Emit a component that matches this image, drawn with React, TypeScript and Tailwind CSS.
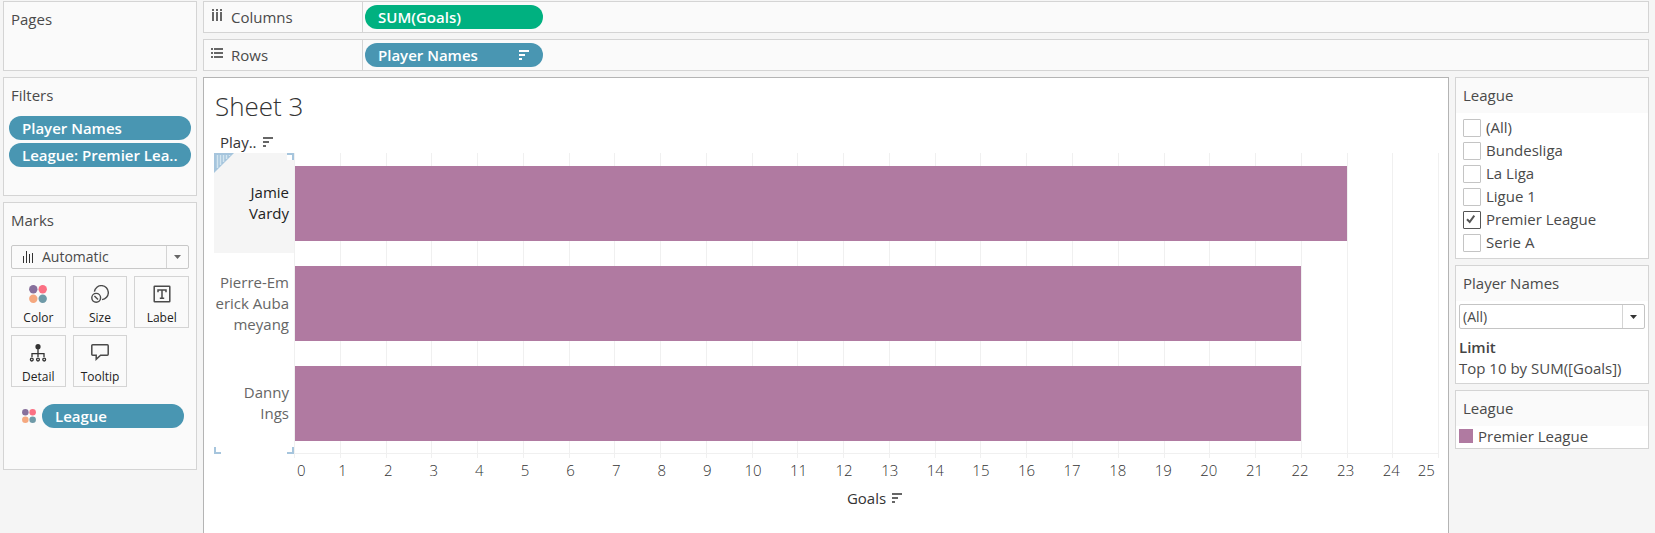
import { useState } from 'react';
import type { ReactNode } from 'react';

interface IPlayer {
  name: string[];
  goals: number;
}

const MAX_GOALS = 25;

const players: IPlayer[] = [
  { name: ['Jamie', 'Vardy'], goals: 23 },
  { name: ['Pierre-Em', 'erick Auba', 'meyang'], goals: 22 },
  { name: ['Danny', 'Ings'], goals: 22 },
];

const leagues = [
  '(All)',
  'Bundesliga',
  'La Liga',
  'Ligue 1',
  'Premier League',
  'Serie A',
];

//ICONS
const SortIcon = () => (
  <svg width="10" height="10" viewBox="0 0 10 10" fill="currentColor">
    <path d="M0 0h10v2H0zM0 4h6v2H0zM0 8h3v2H0z" />
  </svg>
);

const ColumnsIcon = () => (
  <svg width="12" height="12" viewBox="0 0 12 12" fill="#666666" className="-mt-1">
    <path d="M1 0h2v2H1zM5 0h2v2H5zM9 0h2v2H9zM1 3h2v9H1zM5 3h2v9H5zM9 3h2v9H9z" />
  </svg>
);

const RowsIcon = () => (
  <svg width="12" height="12" viewBox="0 0 12 12" fill="#666666" className="-mt-1">
    <path d="M0 1h2v2H0zM0 5h2v2H0zM0 9h2v2H0zM3 1h9v2H3zM3 5h9v2H3zM3 9h9v2H3z" />
  </svg>
);

const ColorIcon = ({ size }: { size: number }) => (
  <svg width={size} height={size} viewBox="0 0 18 18" className="shrink-0">
    <circle cx="4.3" cy="4.3" r="4.2" fill="#87709c" />
    <circle cx="13.7" cy="4.3" r="4.2" fill="#fb7083" />
    <circle cx="4.3" cy="13.7" r="4.2" fill="#f5a87f" />
    <circle cx="13.7" cy="13.7" r="4.2" fill="#6f9aa8" />
  </svg>
);

const SizeIcon = () => (
  <svg width="18" height="18" viewBox="0 0 18 18" fill="none" stroke="#4a4a4a" strokeWidth="1.4">
    <path d="M3.4 6.6A7 7 0 1 1 11 14.6" />
    <circle cx="5.2" cy="12.8" r="4.4" />
    <path d="M3.4 11l3.6 3.6" />
  </svg>
);

const LabelIcon = () => (
  <svg width="18" height="18" viewBox="0 0 18 18" fill="none" stroke="#4a4a4a">
    <rect x="1.2" y="1.2" width="15.6" height="15.6" rx="0.6" strokeWidth="1.5" />
    <path d="M5 7.2V5h8v2.2M9 5v8M6.8 13.2h4.4" strokeWidth="1.5" />
  </svg>
);

const DetailIcon = () => (
  <svg width="18" height="18" viewBox="0 0 18 18" fill="none" stroke="#333333">
    <circle cx="9" cy="2.7" r="2.6" fill="#333333" stroke="none" />
    <path d="M9 5v8M3 13V9.6h12V13" strokeWidth="1.3" />
    <circle cx="2.8" cy="15.6" r="1.4" strokeWidth="1.3" />
    <circle cx="9" cy="15.6" r="1.4" strokeWidth="1.3" />
    <circle cx="15.2" cy="15.6" r="1.4" strokeWidth="1.3" />
  </svg>
);

const TooltipIcon = () => (
  <svg width="18" height="18" viewBox="0 0 18 18" fill="none" stroke="#4a4a4a" strokeWidth="1.5">
    <path d="M1.7.8h14.6q.9 0 .9.9v8.6q0 .9-.9.9H9.6L5.2 15.2v-4H1.7q-.9 0-.9-.9V1.7q0-.9.9-.9z" />
  </svg>
);

const BarsIcon = () => (
  <svg width="11" height="12" viewBox="0 0 11 12" fill="#333333">
    <path d="M0 5h1v7H0zM3 0h1v12H3zM6 3h1v9H6zM9 2h1v10H9z" />
  </svg>
);

const Caret = ({ className }: { className: string }) => (
  <svg width="7" height="4" viewBox="0 0 7 4" className={className} fill="currentColor">
    <path d="M0 0h7L3.5 4z" />
  </svg>
);

//CARDS
const Card = ({
  title,
  className = '',
  children,
}: {
  title: string;
  className?: string;
  children?: ReactNode;
}) => (
  <section className={`border border-[#d4d4d4] bg-[#fafafa] ${className}`}>
    <h2 className="h-[35px] pl-[7px] leading-[35px]">{title}</h2>
    {children}
  </section>
);

const Pill = ({
  label,
  color = 'bg-[#4996b2]',
  className = '',
  sorted = false,
}: {
  label: string;
  color?: string;
  className?: string;
  sorted?: boolean;
}) => (
  <button
    className={`flex h-6 items-center justify-between rounded-full pr-[14px] pl-[13px] font-semibold whitespace-nowrap text-white ${color} ${className}`}
  >
    {label}
    {sorted && <SortIcon />}
  </button>
);

const Shelf = ({
  icon,
  label,
  children,
}: {
  icon: ReactNode;
  label: string;
  children: ReactNode;
}) => (
  <section className="flex h-8 border border-[#d4d4d4] bg-[#fafafa]">
    <h2 className="flex w-[159px] items-center gap-2 border-r border-[#d4d4d4] pl-[7px]">
      {icon}
      {label}
    </h2>
    <div className="flex items-center pl-[2px]">{children}</div>
  </section>
);

const MarkButton = ({ icon, label }: { icon: ReactNode; label: string }) => (
  <button className="flex h-[52px] flex-col items-center gap-[7px] border border-[#d4d4d4] pt-2 text-xs leading-4 text-[#222222]">
    {icon}
    {label}
  </button>
);

const Chart = () => {
  const ticks = Array.from({ length: MAX_GOALS + 1 }, (_, i) => i);

  return (
    <div className="pr-[9px] pl-[10px]">
      <div className="flex h-[26px] items-center gap-[6px] pt-1 pl-[6px] text-[#333333]">
        Play..
        <span className="text-[#666666]">
          <SortIcon />
        </span>
      </div>

      <div className="flex">
        <div className="relative w-20 shrink-0 text-right leading-[21px] text-[#666666]">
          {players.map((player, i) => (
            <div
              key={i}
              className={`flex h-[100px] flex-col justify-center pr-[5px] ${
                i === 0 ? 'bg-[#f5f5f5] text-[#222222]' : ''
              }`}
            >
              {player.name.map((line) => (
                <span key={line}>{line}</span>
              ))}
            </div>
          ))}

          {/* selection handles */}
          <svg width="20" height="20" viewBox="0 0 20 20" className="absolute top-0 left-0">
            <path d="M0 0h20L0 20z" fill="#a6c5dd" />
            <path
              d="M3.5 2v13M6.5 2v10M9.5 2v7M12.5 2v4M15.5 2v1"
              stroke="#d3e5f0"
              strokeWidth="1.5"
            />
          </svg>
          <span className="absolute top-0 right-0 size-[7px] border-t-2 border-r-2 border-[#a6c5dd] bg-white"></span>
          <span className="absolute bottom-0 left-0 size-[7px] border-b-2 border-l-2 border-[#a6c5dd]"></span>
          <span className="absolute right-0 bottom-0 size-[7px] border-r-2 border-b-2 border-[#a6c5dd]"></span>
        </div>

        <div className="relative grow">
          <div className="absolute inset-x-0 top-0 -bottom-1 flex border-r border-[#f0f0f0]">
            {ticks.slice(1).map((tick) => (
              <span key={tick} className="flex-1 border-l border-[#f0f0f0]"></span>
            ))}
          </div>
          <div className="relative border-b border-[#f0f0f0] px-px">
            {players.map((player, i) => (
              <div key={i} className="flex h-[100px] items-center pt-px">
                <div
                  className="h-[75px] bg-[#b07aa1]"
                  style={{ width: `${(player.goals / MAX_GOALS) * 100}%` }}
                ></div>
              </div>
            ))}
          </div>
        </div>
      </div>

      <div className="mt-[6px] flex pr-[2px] pl-[79px] leading-5 font-light text-[#333333]">
        {ticks.map((tick) => {
          if (tick === 0) {
            return (
              <span key={tick} className="w-0 flex-[1] pl-1">
                {tick}
              </span>
            );
          }
          if (tick === MAX_GOALS) {
            return (
              <span key={tick} className="w-0 flex-[1]">
                <span className="float-right pr-[2px]">{tick}</span>
              </span>
            );
          }
          return (
            <span key={tick} className="w-0 flex-[2] text-center">
              {tick}
            </span>
          );
        })}
      </div>

      <div className="mt-2 flex items-center justify-center gap-[6px] pl-24 leading-5 text-[#333333]">
        Goals
        <span className="text-[#666666]">
          <SortIcon />
        </span>
      </div>
    </div>
  );
};

const App = () => {
  const [selected, setSelected] = useState<string[]>(['Premier League']);

  const toggle = (league: string) => {
    setSelected((prev) =>
      prev.includes(league)
        ? prev.filter((item) => item !== league)
        : [...prev, league]
    );
  };

  return (
    <main className="flex h-screen gap-[6px] overflow-hidden bg-[#f5f5f5] pt-px pr-[6px] pl-[3px] font-['Open_Sans',sans-serif] text-[15px] text-[#4a4a4a]">
      <aside className="flex w-[194px] shrink-0 flex-col gap-[6px]">
        <Card title="Pages" className="h-[70px]" />

        <Card title="Filters" className="h-[119px]">
          <div className="flex flex-col gap-[3px] px-[5px] pt-[3px]">
            <Pill label="Player Names" />
            <Pill label="League: Premier Lea.." />
          </div>
        </Card>

        <Card title="Marks" className="h-[268px]">
          <div className="px-[7px] pt-[7px]">
            <div className="relative">
              <span className="pointer-events-none absolute top-[6px] left-3">
                <BarsIcon />
              </span>
              <select
                aria-label="Mark type"
                className="block h-6 w-full appearance-none rounded-[2px] border border-[#c8c8c8] pl-[30px] text-sm leading-5"
              >
                <option>Automatic</option>
              </select>
              <span className="pointer-events-none absolute inset-y-px right-px flex w-[22px] items-center justify-center border-l border-[#d4d4d4]">
                <Caret className="text-[#666666]" />
              </span>
            </div>

            <div className="mt-[7px] grid grid-cols-3 gap-[7px]">
              <MarkButton icon={<ColorIcon size={18} />} label="Color" />
              <MarkButton icon={<SizeIcon />} label="Size" />
              <MarkButton icon={<LabelIcon />} label="Label" />
              <MarkButton icon={<DetailIcon />} label="Detail" />
              <MarkButton icon={<TooltipIcon />} label="Tooltip" />
            </div>

            <div className="mt-[17px] flex items-center gap-[6px] pr-[5px] pl-[11px]">
              <ColorIcon size={14} />
              <Pill label="League" className="grow" />
            </div>
          </div>
        </Card>
      </aside>

      <div className="flex min-w-0 grow flex-col gap-[6px]">
        <Shelf icon={<ColumnsIcon />} label="Columns">
          <Pill label="SUM(Goals)" color="bg-[#00b180]" className="w-[178px]" />
        </Shelf>
        <Shelf icon={<RowsIcon />} label="Rows">
          <Pill label="Player Names" className="w-[178px]" sorted />
        </Shelf>

        <div className="flex min-h-0 grow gap-[6px]">
          <section className="min-w-0 grow border border-b-0 border-[#b4b4b4] bg-white">
            <h1 className="h-[49px] pt-[10px] pl-[11px] text-[26px] leading-9 font-light text-[#333333]">
              Sheet 3
            </h1>
            <Chart />
          </section>

          <aside className="flex w-[194px] shrink-0 flex-col gap-[6px]">
            <Card title="League" className="h-[182px]">
              <div className="h-[145px] bg-white pt-[3px] pl-[7px]">
                {leagues.map((league) => (
                  <label key={league} className="relative flex h-[23px] items-center gap-[5px]">
                    <input
                      type="checkbox"
                      checked={selected.includes(league)}
                      onChange={() => toggle(league)}
                      className="size-[18px] appearance-none rounded-[1px] border border-[#c4c4c4] bg-white checked:border-[#555555]"
                    />
                    {selected.includes(league) && (
                      <svg
                        width="18"
                        height="18"
                        viewBox="0 0 18 18"
                        className="pointer-events-none absolute left-0"
                        fill="none"
                        stroke="#555555"
                        strokeWidth="2"
                      >
                        <path d="M4 8.2l2.7 2.8 4.6-6.4" />
                      </svg>
                    )}
                    {league}
                  </label>
                ))}
              </div>
            </Card>

            <Card title="Player Names" className="h-[119px]">
              <div className="h-[82px] bg-white px-[3px] pt-[3px]">
                <div className="relative">
                  <select
                    aria-label="Player Names"
                    className="block h-[25px] w-full appearance-none rounded-[2px] border border-[#c4c4c4] bg-white pl-[3px] text-sm leading-5"
                  >
                    <option>(All)</option>
                  </select>
                  <span className="pointer-events-none absolute inset-y-px right-px flex w-[22px] items-center justify-center border-l border-[#d4d4d4]">
                    <Caret className="text-[#333333]" />
                  </span>
                </div>
                <p className="mt-2 leading-[21px] font-semibold text-[#444444]">Limit</p>
                <p className="leading-[21px] whitespace-nowrap">Top 10 by SUM([Goals])</p>
              </div>
            </Card>

            <Card title="League" className="h-[59px]">
              <div className="flex h-[22px] items-center gap-[5px] bg-white pb-[2px] pl-[3px]">
                <span className="size-[14px] bg-[#b07aa1]"></span>
                Premier League
              </div>
            </Card>
          </aside>
        </div>
      </div>
    </main>
  );
};

export default App;
